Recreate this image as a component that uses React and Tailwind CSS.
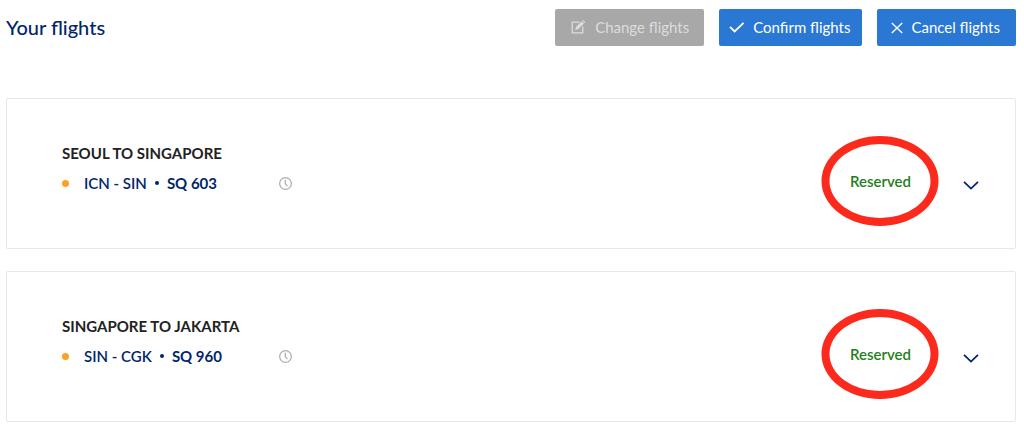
import React, { useState } from "react";

const flights = [
  { id: "sq603", title: "SEOUL TO SINGAPORE", route: "ICN - SIN", number: "SQ 603", status: "Reserved" },
  { id: "sq960", title: "SINGAPORE TO JAKARTA", route: "SIN - CGK", number: "SQ 960", status: "Reserved" },
];

function EditIcon() {
  return (
    <svg className="h-4 w-4" viewBox="0 0 16 16" fill="none" stroke="currentColor" strokeWidth="1.3" aria-hidden="true">
      <path d="M8.5 2.2H1.2v10.6h10.6V6.5" />
      <path d="M4.2 10.1l.8-3.1 5.8-5.8 2.2 2.2-5.8 5.8z" fill="currentColor" stroke="none" />
      <path d="M11.4.8l.8-.8 2.2 2.2-.8.8z" fill="currentColor" stroke="none" />
    </svg>
  );
}

function CheckIcon() {
  return (
    <svg className="h-4 w-4" viewBox="0 0 16 16" fill="none" stroke="currentColor" strokeWidth="1.8" aria-hidden="true">
      <path d="M1 6.8l4.6 4.6 9-8.6" />
    </svg>
  );
}

function CrossIcon() {
  return (
    <svg className="h-3 w-3" viewBox="0 0 12 12" fill="none" stroke="currentColor" strokeWidth="1.4" aria-hidden="true">
      <path d="M.8 1l10.4 10M11.2 1L.8 11" />
    </svg>
  );
}

function ClockIcon() {
  return (
    <svg className="h-[13px] w-[13px] text-[#b0b0b0]" viewBox="0 0 12 12" fill="none" stroke="currentColor" strokeWidth="1.2" aria-hidden="true">
      <circle cx="6" cy="6" r="5.4" />
      <path d="M5.8 2.6v3.5l2 2.4" />
    </svg>
  );
}

function ChevronIcon() {
  return (
    <svg className="h-[9px] w-4" viewBox="0 0 16 9" fill="none" stroke="currentColor" strokeWidth="1.8" aria-hidden="true">
      <path d="M1 .8l7 6.8 7-6.8" />
    </svg>
  );
}

function FlightCard({ flight }) {
  const [open, setOpen] = useState(false);

  return (
    <article className="flex items-start justify-between rounded-xs border border-[#e4e8f1] pt-[42px] pr-9 pb-[47px] pl-[55px]">
      <div>
        <h2 className="text-[15px] leading-6 font-bold text-[#222222]">{flight.title}</h2>
        <div className="mt-1.5 flex h-6 items-center text-[15px] text-[#00266b]">
          <div className="flex w-[217px] items-center">
            <span className="mr-[15px] h-[7px] w-[7px] rounded-full bg-[#ff9e26]" />
            <span className="font-semibold">{flight.route}</span>
            <span className="mx-2 h-1 w-1 rounded-full bg-[#00266b]" />
            <span className="font-bold">{flight.number}</span>
          </div>
          <ClockIcon />
        </div>
      </div>
      <div className="mt-7 flex items-start">
        <div className="relative mr-[52px] text-[15px] leading-6 font-semibold text-[#22801c]">
          {flight.status}
          <span className="absolute top-1/2 left-1/2 h-[90px] w-[117px] -translate-x-1/2 -translate-y-1/2 rounded-[50%] border-8 border-[#fb2a1c]" />
        </div>
        <button
          type="button"
          aria-label="Toggle flight details"
          aria-expanded={open}
          onClick={() => setOpen((prev) => !prev)}
          className="flex h-8 items-center text-[#00266b]"
        >
          <ChevronIcon />
        </button>
      </div>
    </article>
  );
}

export default function App() {
  return (
    <main className="bg-white pt-[9px] pr-2 pb-1 pl-1.5 font-['Lato',sans-serif]">
      <header className="flex items-start justify-between">
        <h1 className="text-[20px] leading-9 font-medium text-[#00266b]">Your flights</h1>
        <div className="flex gap-[15px] text-[15px]">
          <button type="button" disabled className="flex h-[37px] items-center gap-2 rounded-xs bg-[#a8a8a8] pr-[15px] pl-4 text-[#dcdcdc]">
            <EditIcon />
            Change flights
          </button>
          <button type="button" className="flex h-[37px] items-center gap-2 rounded-xs bg-[#2a77d4] pr-3 pl-2.5 text-white">
            <CheckIcon />
            Confirm flights
          </button>
          <button type="button" className="flex h-[37px] items-center gap-2 rounded-xs bg-[#2a77d4] pr-4 pl-3.5 text-white">
            <CrossIcon />
            Cancel flights
          </button>
        </div>
      </header>
      <section className="mt-[52px] flex flex-col gap-[22px]">
        {flights.map((flight) => (
          <FlightCard key={flight.id} flight={flight} />
        ))}
      </section>
    </main>
  );
}
